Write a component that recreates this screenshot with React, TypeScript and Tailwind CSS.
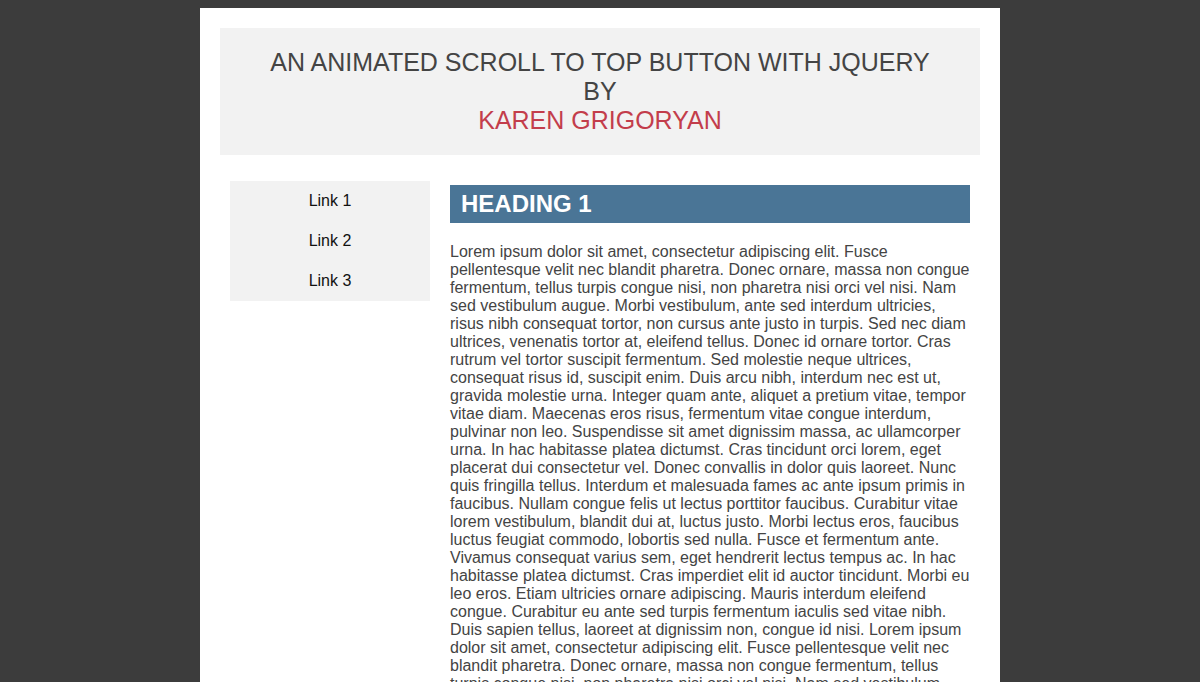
export default function App() {
  const lorem =
    "Lorem ipsum dolor sit amet, consectetur adipiscing elit. Fusce pellentesque velit nec blandit pharetra. Donec ornare, massa non congue fermentum, tellus turpis congue nisi, non pharetra nisi orci vel nisi. Nam sed vestibulum augue. Morbi vestibulum, ante sed interdum ultricies, risus nibh consequat tortor, non cursus ante justo in turpis. Sed nec diam ultrices, venenatis tortor at, eleifend tellus. Donec id ornare tortor. Cras rutrum vel tortor suscipit fermentum. Sed molestie neque ultrices, consequat risus id, suscipit enim. Duis arcu nibh, interdum nec est ut, gravida molestie urna. Integer quam ante, aliquet a pretium vitae, tempor vitae diam. Maecenas eros risus, fermentum vitae congue interdum, pulvinar non leo. Suspendisse sit amet dignissim massa, ac ullamcorper urna. In hac habitasse platea dictumst. Cras tincidunt orci lorem, eget placerat dui consectetur vel. Donec convallis in dolor quis laoreet. Nunc quis fringilla tellus. Interdum et malesuada fames ac ante ipsum primis in faucibus. Nullam congue felis ut lectus porttitor faucibus. Curabitur vitae lorem vestibulum, blandit dui at, luctus justo. Morbi lectus eros, faucibus luctus feugiat commodo, lobortis sed nulla. Fusce et fermentum ante. Vivamus consequat varius sem, eget hendrerit lectus tempus ac. In hac habitasse platea dictumst. Cras imperdiet elit id auctor tincidunt. Morbi eu leo eros. Etiam ultricies ornare adipiscing. Mauris interdum eleifend congue. Curabitur eu ante sed turpis fermentum iaculis sed vitae nibh. Duis sapien tellus, laoreet at dignissim non, congue id nisi. ";

  return (
    <div className="min-h-screen bg-[#3c3c3c] pt-2 font-['Liberation_Sans',Arial,sans-serif]">
      <div className="mx-auto w-[800px] bg-white p-5 pb-10">
        {/* Header */}
        <div className="bg-[#f2f2f2] py-5 text-center text-[25px] leading-[29px] text-[#444]">
          <div>AN ANIMATED SCROLL TO TOP BUTTON WITH JQUERY</div>
          <div>BY</div>
          <div className="text-[#c33d4b]">KAREN GRIGORYAN</div>
        </div>

        <div className="flex">
          {/* Sidebar */}
          <div className="ml-[10px] mt-[26px] w-[200px] self-start bg-[#f2f2f2]">
            {["Link 1", "Link 2", "Link 3"].map((l) => (
              <a
                key={l}
                href="#"
                className="flex h-10 items-center justify-center text-[16px] text-[#111]"
              >
                {l}
              </a>
            ))}
          </div>

          {/* Main */}
          <div className="ml-5 mt-[30px] w-[520px]">
            <h2 className="flex h-[38px] items-center bg-[#4a7596] pl-[11px] pr-[10px] text-[24px] font-bold text-white">
              HEADING 1
            </h2>
            <p className="mt-[20px] text-[16px] leading-[18px] text-[#444]">
              {lorem}
              {lorem}
            </p>
          </div>
        </div>
      </div>
    </div>
  );
}
